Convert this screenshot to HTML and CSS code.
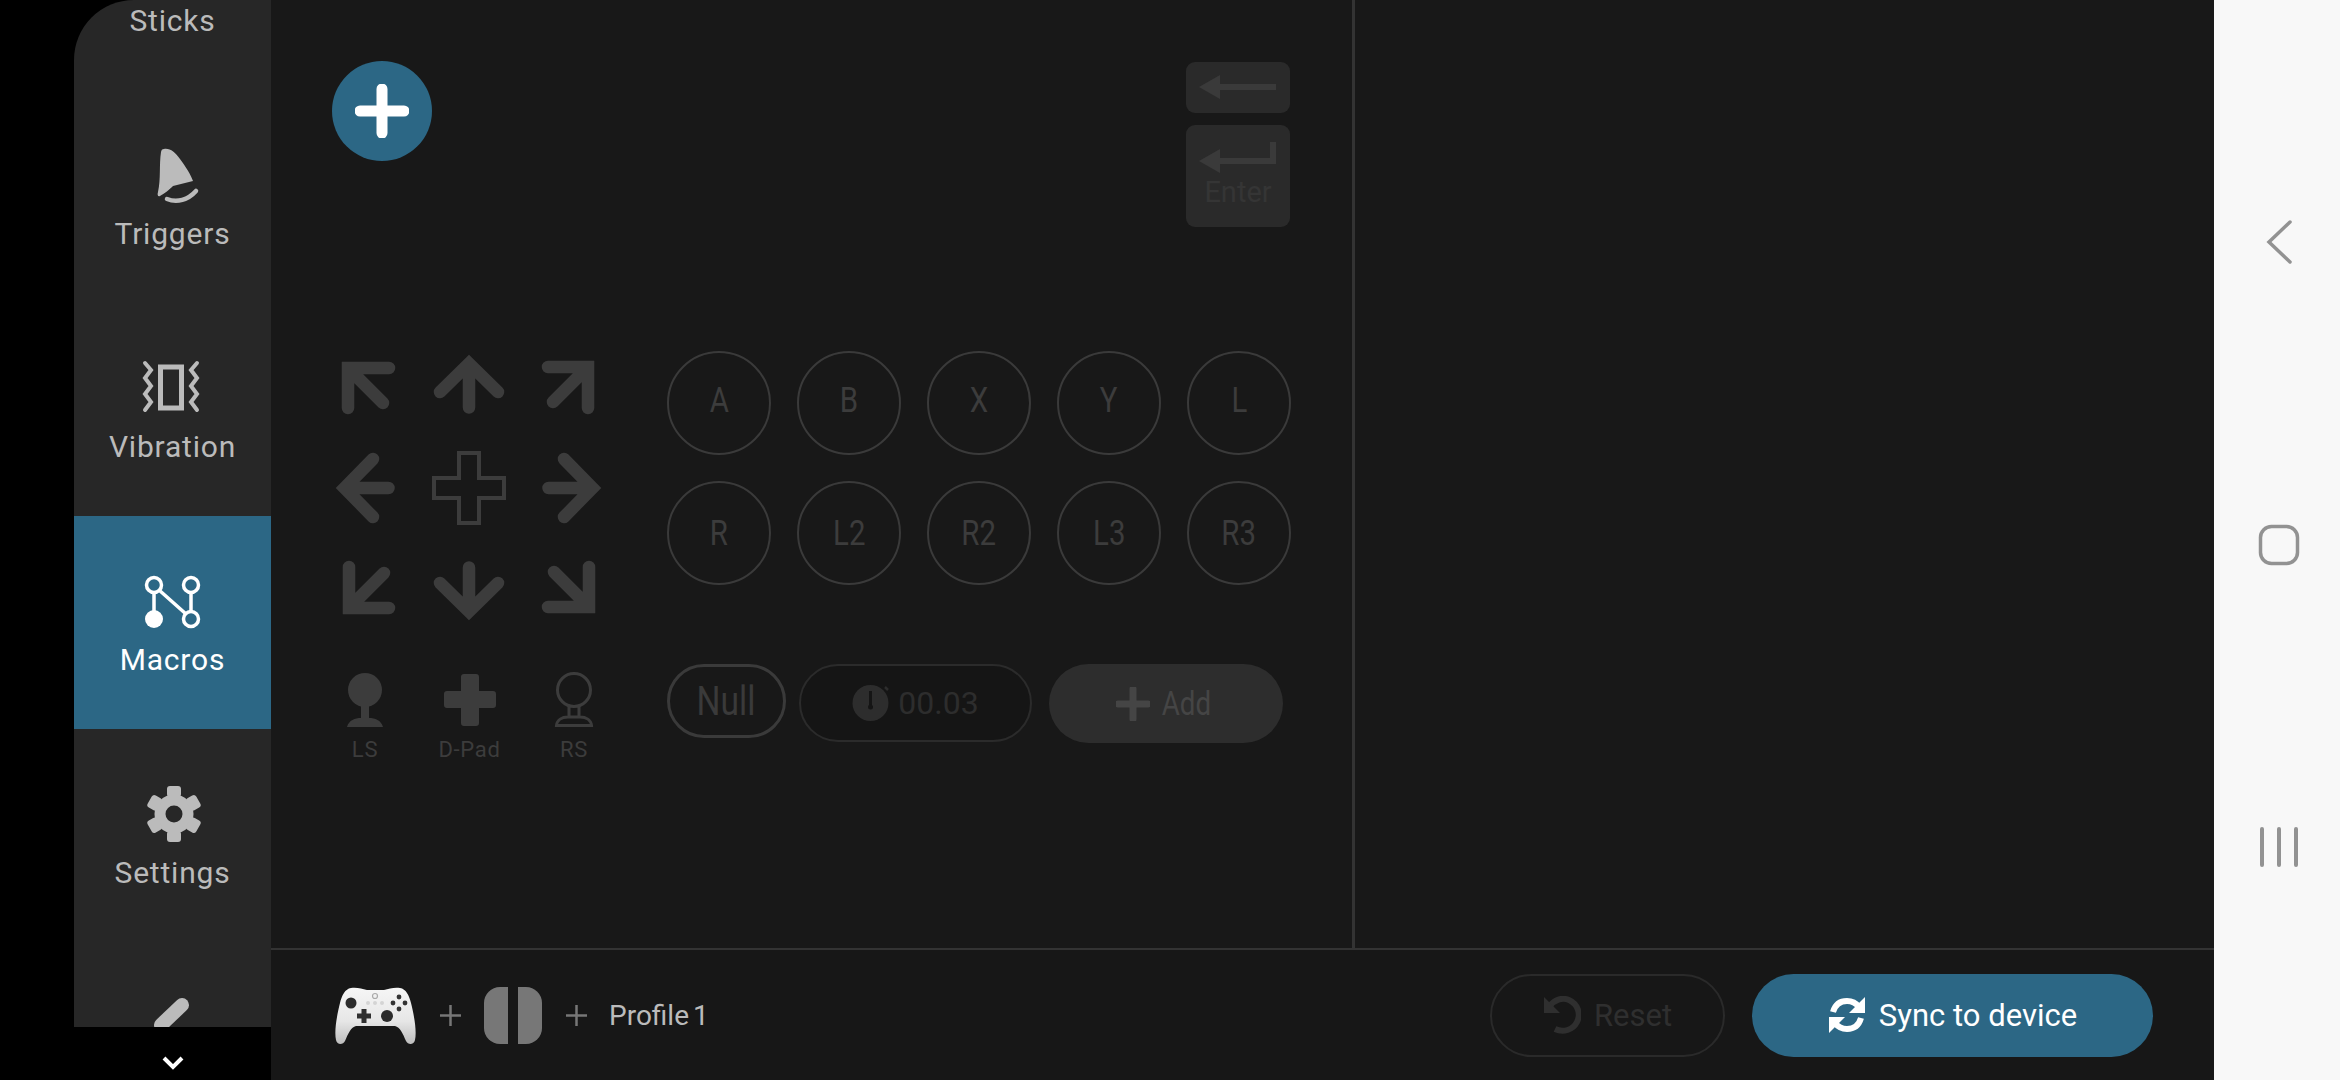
FILE: index.html
```html
<!DOCTYPE html>
<html lang="en">
<head>
    <meta charset="UTF-8">
    <title>Macros</title>
    <link rel="stylesheet" href="styles.css">
</head>
<body>
    <svg class="defs" width="0" height="0">
        <symbol id="arrow-up" viewBox="0 0 72 72">
            <path d="M7 44 36 15.500 65 44M36 16V59.500" fill="none" stroke="currentColor" stroke-width="12.500" stroke-linecap="round"/>
        </symbol>
        <symbol id="arrow-diag" viewBox="0 0 72 72">
            <path d="M60 20H19V60M20 21 54 55" fill="none" stroke="currentColor" stroke-width="12.500" stroke-linecap="round"/>
        </symbol>
    </svg>

    <div class="left-gap"></div>

    <aside class="sidebar">
        <nav class="nav-list">
            <div class="nav-item">
                <svg class="nav-icon" viewBox="0 0 72 72"></svg>
                <span>Sticks</span>
            </div>
            <div class="nav-item">
                <svg class="nav-icon" viewBox="0 0 72 72">
                    <path d="M27 10C33 9 38 13 43 20 49 28 54 36 56 42L36 47C33 50 27 55 23 57 21 58 20 56 21 53 24 40 22 26 24 13 24.500 11 25 10 27 10Z" fill="currentColor"/>
                    <path d="M30 60C40 64 51 61 59 52" fill="none" stroke="currentColor" stroke-width="4.500" stroke-linecap="round"/>
                </svg>
                <span>Triggers</span>
            </div>
            <div class="nav-item">
                <svg class="nav-icon" viewBox="0 0 72 72">
                    <rect x="23.500" y="15" width="21" height="41" fill="none" stroke="currentColor" stroke-width="5"/>
                    <path d="M8 11 14 18 8 26 14 34 8 42 14 50 8 58M60 11 54 18 60 26 54 34 60 42 54 50 60 58" fill="none" stroke="currentColor" stroke-width="4" stroke-linecap="round"/>
                </svg>
                <span>Vibration</span>
            </div>
            <div class="nav-item active">
                <svg class="nav-icon" viewBox="0 0 72 72">
                    <circle cx="17" cy="20" r="7.500" fill="none" stroke="currentColor" stroke-width="3.500"/>
                    <circle cx="54" cy="20" r="7.500" fill="none" stroke="currentColor" stroke-width="3.500"/>
                    <circle cx="54" cy="54" r="7.500" fill="none" stroke="currentColor" stroke-width="3.500"/>
                    <circle cx="17" cy="54" r="9" fill="currentColor"/>
                    <path d="M17 27V48M22 25 49 49M54 27V47" fill="none" stroke="currentColor" stroke-width="3.500"/>
                </svg>
                <span>Macros</span>
            </div>
            <div class="nav-item">
                <svg class="nav-icon" viewBox="0 0 72 72">
                    <g transform="translate(37 36)" fill="currentColor">
                        <circle r="14" fill="none" stroke="currentColor" stroke-width="11"/>
                        <rect x="-7" y="-28" width="14" height="11" rx="3"/>
                        <rect x="-7" y="-28" width="14" height="11" rx="3" transform="rotate(60)"/>
                        <rect x="-7" y="-28" width="14" height="11" rx="3" transform="rotate(120)"/>
                        <rect x="-7" y="-28" width="14" height="11" rx="3" transform="rotate(180)"/>
                        <rect x="-7" y="-28" width="14" height="11" rx="3" transform="rotate(240)"/>
                        <rect x="-7" y="-28" width="14" height="11" rx="3" transform="rotate(300)"/>
                    </g>
                </svg>
                <span>Settings</span>
            </div>
            <div class="nav-item">
                <svg class="nav-icon" viewBox="0 0 72 72">
                    <path d="M45 14 24 34" fill="none" stroke="currentColor" stroke-width="14" stroke-linecap="round"/>
                </svg>
            </div>
        </nav>
        <div class="nav-more">
            <svg width="22" height="14" viewBox="0 0 22 14">
                <path d="M2 2 11 11 20 2" fill="none" stroke="#fff" stroke-width="4"/>
            </svg>
        </div>
    </aside>

    <main class="main">
        <div class="workspace">
            <section class="editor">
                <div class="editor-top">
                    <button class="add-step">
                        <svg width="54" height="54" viewBox="0 0 54 54">
                            <path d="M27 5V49M5 27H49" fill="none" stroke="#fff" stroke-width="11" stroke-linecap="round"/>
                        </svg>
                    </button>
                    <div class="keys">
                        <div class="key key-back">
                            <svg width="104" height="51" viewBox="0 0 104 51">
                                <path d="M13 25 34 13V22H90V28H34V37Z" fill="currentColor"/>
                            </svg>
                        </div>
                        <div class="key key-enter">
                            <svg width="104" height="52" viewBox="0 0 104 52">
                                <path d="M13 36 34 24V33H84V17H90V39H34V48Z" fill="currentColor"/>
                            </svg>
                            <span>Enter</span>
                        </div>
                    </div>
                </div>

                <div class="controls">
                    <div class="pad-col">
                        <div class="arrow-grid">
                            <svg class="arrow"><use href="#arrow-diag"/></svg>
                            <svg class="arrow"><use href="#arrow-up"/></svg>
                            <svg class="arrow rot-90"><use href="#arrow-diag"/></svg>
                            <svg class="arrow rot-270"><use href="#arrow-up"/></svg>
                            <svg class="arrow-center" width="74" height="74" viewBox="0 0 74 74">
                                <path d="M27 2H47V27H72V47H47V72H27V47H2V27H27Z" fill="none" stroke="currentColor" stroke-width="4"/>
                            </svg>
                            <svg class="arrow rot-90"><use href="#arrow-up"/></svg>
                            <svg class="arrow rot-270"><use href="#arrow-diag"/></svg>
                            <svg class="arrow rot-180"><use href="#arrow-up"/></svg>
                            <svg class="arrow rot-180"><use href="#arrow-diag"/></svg>
                        </div>
                        <div class="stick-row">
                            <div class="stick">
                                <svg width="60" height="56" viewBox="0 0 60 56">
                                    <circle cx="30" cy="18" r="17" fill="currentColor"/>
                                    <path d="M26 30H34V46C40 46 46 48 48 55H12C14 48 20 46 26 46Z" fill="currentColor"/>
                                </svg>
                                <span>LS</span>
                            </div>
                            <div class="stick">
                                <svg width="60" height="56" viewBox="0 0 60 56">
                                    <path d="M24 2H36Q39 2 39 5V19H53Q56 19 56 22V33Q56 36 53 36H39V51Q39 54 36 54H24Q21 54 21 51V36H7Q4 36 4 33V22Q4 19 7 19H21V5Q21 2 24 2Z" fill="currentColor"/>
                                </svg>
                                <span>D-Pad</span>
                            </div>
                            <div class="stick">
                                <svg width="60" height="56" viewBox="0 0 60 56">
                                    <g fill="none" stroke="currentColor" stroke-width="3">
                                        <circle cx="30" cy="18" r="16.500"/>
                                        <path d="M25 34V46M35 34V46M12.500 53.500C13 48 18 45 24 45H36C42 45 47 48 47.500 53.500Z"/>
                                    </g>
                                </svg>
                                <span>RS</span>
                            </div>
                        </div>
                    </div>

                    <div class="button-col">
                        <div class="button-grid">
                            <button class="round-btn"><span>A</span></button>
                            <button class="round-btn"><span>B</span></button>
                            <button class="round-btn"><span>X</span></button>
                            <button class="round-btn"><span>Y</span></button>
                            <button class="round-btn"><span>L</span></button>
                            <button class="round-btn"><span>R</span></button>
                            <button class="round-btn"><span>L2</span></button>
                            <button class="round-btn"><span>R2</span></button>
                            <button class="round-btn"><span>L3</span></button>
                            <button class="round-btn"><span>R3</span></button>
                        </div>
                        <div class="pill-row">
                            <button class="pill pill-null"><span>Null</span></button>
                            <button class="pill pill-timer">
                                <svg width="38" height="36" viewBox="0 0 38 36">
                                    <circle cx="18.500" cy="18" r="18" fill="currentColor"/>
                                    <path d="M18.500 6V22" stroke="#151515" stroke-width="3"/>
                                    <circle cx="18.500" cy="22" r="2.500" fill="#151515"/>
                                    <path d="M33 2 36 5" stroke="currentColor" stroke-width="2.500"/>
                                </svg>
                                <span>00.03</span>
                            </button>
                            <button class="pill pill-add">
                                <svg width="34" height="34" viewBox="0 0 34 34">
                                    <path d="M17 2V32M2 17H32" fill="none" stroke="currentColor" stroke-width="7" stroke-linecap="round"/>
                                </svg>
                                <span>Add</span>
                            </button>
                        </div>
                    </div>
                </div>
            </section>
            <section class="side-panel"></section>
        </div>

        <footer class="bottom-bar">
            <div class="profile">
                <svg class="gamepad" width="81" height="57" viewBox="0 0 81 57">
                    <defs>
                        <linearGradient id="pad-body" x1="0" y1="0" x2="0" y2="1">
                            <stop offset="0" stop-color="#f6f6f6"/>
                            <stop offset="0.6" stop-color="#e6e6e6"/>
                            <stop offset="1" stop-color="#bdbdbd"/>
                        </linearGradient>
                    </defs>
                    <path d="M16 1C22 0 27 2 32 3H49C54 2 59 0 65 1 71 2 74 8 76 16 79 28 82 44 80 53 79 58 73 58 71 54 68 47 65 40 60 39H21C16 40 13 47 10 54 8 58 2 58 1 53-1 44 2 28 5 16 7 8 10 2 16 1Z" fill="url(#pad-body)"/>
                    <circle cx="16" cy="16" r="5.500" fill="#2b2b2b"/>
                    <circle cx="52" cy="29" r="6" fill="#2b2b2b"/>
                    <path d="M29 22V36M22 29H36" stroke="#2f2f2f" stroke-width="5"/>
                    <circle cx="64" cy="10" r="2.400" fill="#333"/>
                    <circle cx="58" cy="16" r="2.400" fill="#333"/>
                    <circle cx="70" cy="16" r="2.400" fill="#333"/>
                    <circle cx="64" cy="22" r="2.400" fill="#333"/>
                    <circle cx="40" cy="9" r="2.500" fill="none" stroke="#aaa" stroke-width="1.200"/>
                    <circle cx="33" cy="16" r="2" fill="#d4d4d4"/>
                    <circle cx="40" cy="16" r="2" fill="#d4d4d4"/>
                    <circle cx="47" cy="16" r="2" fill="#d4d4d4"/>
                </svg>
                <svg class="profile-plus" width="21" height="21" viewBox="0 0 21 21">
                    <path d="M10.500 0V21M0 10.500H21" stroke="currentColor" stroke-width="2.500"/>
                </svg>
                <div class="console-icon">
                    <div class="joycon joycon-l"></div>
                    <div class="joycon joycon-r"></div>
                </div>
                <svg class="profile-plus" width="21" height="21" viewBox="0 0 21 21">
                    <path d="M10.500 0V21M0 10.500H21" stroke="currentColor" stroke-width="2.500"/>
                </svg>
                <span class="profile-name">Profile 1</span>
            </div>
            <div class="actions">
                <button class="action action-reset">
                    <svg width="38" height="38" viewBox="0 0 38 38">
                        <path d="M7 10C11 4 19 1 26 4 35 8 38 18 34 26 30 34 20 37 12 33" fill="none" stroke="currentColor" stroke-width="6"/>
                        <path d="M1 1V17H17Z" fill="currentColor"/>
                    </svg>
                    <span>Reset</span>
                </button>
                <button class="action action-sync">
                    <svg width="38" height="38" viewBox="0 0 38 38">
                        <path d="M5 16C7 9 12 5 19 5 24 5 28 7 31 11" fill="none" stroke="#fff" stroke-width="6"/>
                        <path d="M37 1V17H21Z" fill="#fff"/>
                        <path d="M33 22C31 29 26 33 19 33 14 33 10 31 7 27" fill="none" stroke="#fff" stroke-width="6"/>
                        <path d="M1 37V21H17Z" fill="#fff"/>
                    </svg>
                    <span>Sync to device</span>
                </button>
            </div>
        </footer>
    </main>

    <aside class="system-nav">
        <svg width="26" height="44" viewBox="0 0 26 44">
            <path d="M24 2 3 22 24 42" fill="none" stroke="currentColor" stroke-width="3.500" stroke-linecap="round"/>
        </svg>
        <svg width="42" height="42" viewBox="0 0 42 42">
            <rect x="2.500" y="2.500" width="37" height="37" rx="11" fill="none" stroke="currentColor" stroke-width="3.500"/>
        </svg>
        <svg width="40" height="42" viewBox="0 0 40 42">
            <path d="M3 3V39M20 3V39M37 3V39" fill="none" stroke="currentColor" stroke-width="4" stroke-linecap="round"/>
        </svg>
    </aside>
</body>
</html>
```

FILE: styles.css
```css
* {
    box-sizing: border-box;
}

body {
    margin: 0;
    width: 2340px;
    height: 1080px;
    overflow: hidden;
    display: flex;
    background-color: #000;
    font-family: Roboto, "Noto Sans", sans-serif;
}

button {
    font-family: inherit;
    padding: 0;
    cursor: pointer;
}

.defs {
    position: absolute;
}

.left-gap {
    width: 74px;
    flex-shrink: 0;
}

/* sidebar */
.sidebar {
    width: 197px;
    flex-shrink: 0;
    display: flex;
    flex-direction: column;
}

.nav-list {
    height: 1027px;
    overflow: hidden;
    background-color: #272727;
    border-top-left-radius: 60px;
}

.nav-item {
    height: 213px;
    padding-top: 49px;
    display: flex;
    flex-direction: column;
    align-items: center;
    gap: 5px;
    color: #bbb;
    font-size: 30px;
    line-height: 36px;
    letter-spacing: 0.8px;
}

.nav-item:first-child {
    margin-top: -123px;
}

.nav-item.active {
    background-color: #2c6785;
    color: #fff;
}

.nav-icon {
    width: 72px;
    height: 72px;
    flex-shrink: 0;
}

.nav-more {
    height: 53px;
    display: flex;
    justify-content: center;
    padding-top: 29px;
}

/* main area */
.main {
    width: 1943px;
    flex-shrink: 0;
    display: flex;
    flex-direction: column;
    background-color: #181818;
}

.workspace {
    flex: 1;
    display: flex;
}

.editor {
    width: 1084px;
    padding: 61px 62px 0 58px;
    border-right: 3px solid #333;
}

.side-panel {
    flex: 1;
}

.editor-top {
    height: 166px;
    margin-bottom: 121px;
    display: flex;
    justify-content: space-between;
    align-items: flex-start;
}

.add-step {
    width: 100px;
    height: 100px;
    margin-left: 3px;
    border: none;
    border-radius: 50%;
    background-color: #2c6785;
    display: flex;
    justify-content: center;
    align-items: center;
}

.keys {
    margin-top: 1px;
    display: flex;
    flex-direction: column;
    gap: 12px;
}

.key {
    width: 104px;
    border-radius: 9px;
    background-color: #2a2a2a;
    color: #3a3a3a;
    display: flex;
    flex-direction: column;
    align-items: center;
}

.key-back {
    height: 51px;
}

.key-enter {
    height: 102px;
}

.key-enter span {
    margin-top: -3px;
    color: #353535;
    font-size: 29px;
    line-height: 36px;
}

.controls {
    display: flex;
    gap: 59px;
}

/* direction pad */
.pad-col {
    width: 279px;
    color: #3c3c3c;
}

.arrow-grid {
    display: grid;
    grid-template-columns: repeat(3, 72px);
    grid-auto-rows: 72px;
    gap: 31.5px;
    place-items: center;
}

.arrow {
    width: 72px;
    height: 72px;
}

.rot-90 {
    transform: rotate(90deg);
}

.rot-180 {
    transform: rotate(180deg);
}

.rot-270 {
    transform: rotate(270deg);
}

.stick-row {
    margin-top: 45px;
    display: grid;
    grid-template-columns: repeat(3, 72px);
    gap: 32.5px;
}

.stick {
    display: flex;
    flex-direction: column;
    align-items: center;
    white-space: nowrap;
    font-size: 22px;
    line-height: 28px;
    letter-spacing: 0.7px;
    gap: 8px;
}

/* macro buttons */
.button-col {
    padding-top: 3px;
}

.button-grid {
    display: grid;
    grid-template-columns: repeat(5, 104px);
    gap: 26px;
}

.round-btn {
    width: 104px;
    height: 104px;
    border: 2px solid #3a3a3a;
    border-radius: 50%;
    background: transparent;
    color: #3c3c3c;
    font-size: 35px;
}

.round-btn:nth-child(-n+5) {
    padding-bottom: 6px;
}

/* the app's button font is narrower than Roboto */
.round-btn span,
.pill-null span,
.pill-add span {
    display: inline-block;
    transform: scaleX(0.84);
}

.pill-row {
    margin-top: 79px;
    display: flex;
    align-items: flex-start;
}

.pill {
    border-radius: 40px;
    display: flex;
    justify-content: center;
    align-items: center;
}

.pill-null {
    width: 119px;
    height: 74px;
    border: 3px solid #3a3a3a;
    background: transparent;
    color: #3a3a3a;
    font-size: 40px;
}

.pill-timer {
    width: 233px;
    height: 78px;
    margin-left: 13px;
    gap: 8px;
    border: 2px solid #2b2b2b;
    background-color: #151515;
    color: #2d2d2d;
    font-size: 32px;
}

.pill-add {
    width: 234px;
    height: 79px;
    margin-left: 17px;
    gap: 7px;
    border: none;
    background-color: #2d2d2d;
    color: #454545;
    font-size: 33px;
}

/* bottom bar */
.bottom-bar {
    height: 132px;
    padding: 0 61px 0 64px;
    border-top: 2px solid #333;
    background-color: #171717;
    display: flex;
    justify-content: space-between;
    align-items: center;
}

.profile {
    display: flex;
    align-items: center;
}

.profile-plus {
    color: #777;
}

.gamepad {
    margin-right: 24px;
}

.console-icon {
    height: 57px;
    margin: 0 24px 0 23px;
    display: flex;
    gap: 10px;
}

.joycon {
    width: 24px;
    background-color: #777;
}

.joycon-l {
    border-radius: 16px 0 0 16px;
}

.joycon-r {
    border-radius: 0 16px 16px 0;
}

.profile-name {
    margin-left: 22px;
    color: #bbb;
    font-size: 28px;
    word-spacing: -3px;
}

.actions {
    display: flex;
    gap: 27px;
}

.action {
    height: 83px;
    border-radius: 42px;
    display: flex;
    justify-content: center;
    align-items: center;
    gap: 13px;
    font-size: 31px;
}

.action-reset {
    width: 235px;
    border: 2px solid #2a2a2a;
    background: transparent;
    color: #2f2f2f;
}

.action-sync {
    width: 401px;
    border: none;
    background-color: #2c6785;
    color: #fff;
}

/* android nav */
.system-nav {
    width: 126px;
    flex-shrink: 0;
    padding: 220px 0 0 4px;
    background-color: #f8f8f8;
    color: #929292;
    display: flex;
    flex-direction: column;
    align-items: center;
    gap: 260px;
}
```
